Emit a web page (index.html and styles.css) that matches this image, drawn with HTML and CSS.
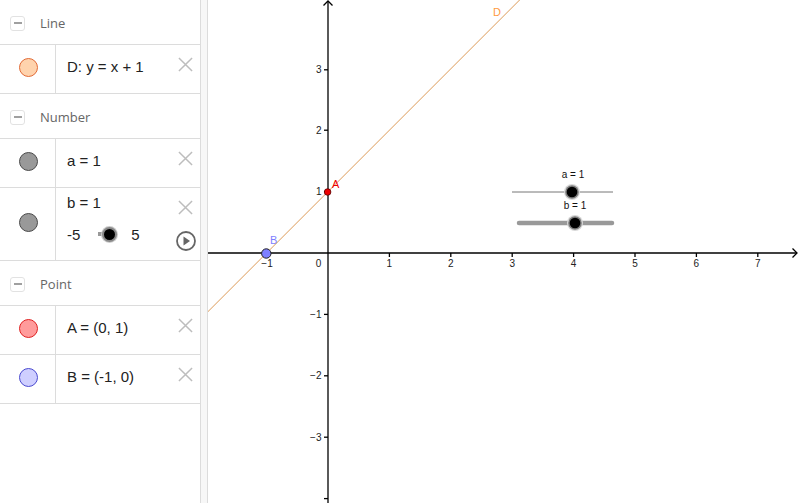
FILE: index.html
```html
<!DOCTYPE html>
<html>
<head>
<meta charset="utf-8">
<link rel="stylesheet" href="styles.css">
</head>
<body>
<div class="app">
  <div class="algebra">
    <div class="group-header"><span class="collapse"><span class="dash"></span></span><span class="group-title">Line</span></div>
    <div class="item">
      <div class="marble-cell"><span class="marble m-line"></span></div>
      <div class="content">
        <span class="expr">D: y = x + 1</span>
        <span class="actions"><svg class="del" viewBox="0 0 16 16"><path d="M1 1L15 15M15 1L1 15"/></svg></span>
      </div>
    </div>
    <div class="group-header"><span class="collapse"><span class="dash"></span></span><span class="group-title">Number</span></div>
    <div class="item">
      <div class="marble-cell"><span class="marble m-num"></span></div>
      <div class="content">
        <span class="expr">a = 1</span>
        <span class="actions"><svg class="del" viewBox="0 0 16 16"><path d="M1 1L15 15M15 1L1 15"/></svg></span>
      </div>
    </div>
    <div class="item item-tall">
      <div class="marble-cell"><span class="marble m-num"></span></div>
      <div class="content content-col">
        <div class="col-text">
          <span class="expr">b = 1</span>
          <div class="slider-row">
            <span>-5</span>
            <span class="mini-slider"><span class="stub"></span><span class="knob"></span></span>
            <span>5</span>
          </div>
        </div>
        <span class="actions actions-col">
          <svg class="del" viewBox="0 0 16 16"><path d="M1 1L15 15M15 1L1 15"/></svg>
          <svg class="play" viewBox="0 0 22 22"><circle cx="11" cy="11" r="9"/><path class="tri" d="M8.5 6.5L15 11L8.5 15.5Z"/></svg>
        </span>
      </div>
    </div>
    <div class="group-header"><span class="collapse"><span class="dash"></span></span><span class="group-title">Point</span></div>
    <div class="item">
      <div class="marble-cell"><span class="marble m-a"></span></div>
      <div class="content">
        <span class="expr">A = (0, 1)</span>
        <span class="actions"><svg class="del" viewBox="0 0 16 16"><path d="M1 1L15 15M15 1L1 15"/></svg></span>
      </div>
    </div>
    <div class="item">
      <div class="marble-cell"><span class="marble m-b"></span></div>
      <div class="content">
        <span class="expr">B = (-1, 0)</span>
        <span class="actions"><svg class="del" viewBox="0 0 16 16"><path d="M1 1L15 15M15 1L1 15"/></svg></span>
      </div>
    </div>
  </div>
  <div class="splitter"></div>
  <div class="graphics">
    <svg class="plot" viewBox="208 0 592 503" width="592" height="503">
      <line class="fn" x1="100" y1="419.6" x2="640" y2="-120.4"/>
      <g class="axis">
        <line x1="208" y1="253" x2="797" y2="253"/>
        <polyline points="792.5,248.5 797,253 792.5,257.5"/>
        <line x1="328" y1="503" x2="328" y2="1"/>
        <polyline points="323.5,5.5 328,1 332.5,5.5"/>
        <line x1="266.6" y1="253" x2="266.6" y2="257"/>
        <line x1="389.4" y1="253" x2="389.4" y2="257"/>
        <line x1="450.8" y1="253" x2="450.8" y2="257"/>
        <line x1="512.2" y1="253" x2="512.2" y2="257"/>
        <line x1="573.6" y1="253" x2="573.6" y2="257"/>
        <line x1="635" y1="253" x2="635" y2="257"/>
        <line x1="696.4" y1="253" x2="696.4" y2="257"/>
        <line x1="757.8" y1="253" x2="757.8" y2="257"/>
        <line x1="324" y1="69.8" x2="328" y2="69.8"/>
        <line x1="324" y1="130.2" x2="328" y2="130.2"/>
        <line x1="324" y1="191.6" x2="328" y2="191.6"/>
        <line x1="324" y1="314.4" x2="328" y2="314.4"/>
        <line x1="324" y1="375.8" x2="328" y2="375.8"/>
        <line x1="324" y1="437.2" x2="328" y2="437.2"/>
        <line x1="324" y1="498.6" x2="328" y2="498.6"/>
      </g>
      <g class="ticklabels xl">
        <text x="267" y="267">−1</text>
        <text x="389.4" y="267">1</text>
        <text x="450.8" y="267">2</text>
        <text x="512.2" y="267">3</text>
        <text x="573.6" y="267">4</text>
        <text x="635" y="267">5</text>
        <text x="696.4" y="267">6</text>
        <text x="757.8" y="267">7</text>
        <text x="318.5" y="267">0</text>
      </g>
      <g class="ticklabels yl">
        <text x="321.5" y="73.3">3</text>
        <text x="321.5" y="133.7">2</text>
        <text x="321.5" y="195.1">1</text>
        <text x="321.5" y="317.9">−1</text>
        <text x="321.5" y="379.3">−2</text>
        <text x="321.5" y="440.7">−3</text>
      </g>
      <text class="lbl-d" x="493" y="15.5">D</text>
      <g class="slider">
        <line class="track-a" x1="512" y1="192" x2="613" y2="192"/>
        <circle class="halo" cx="572" cy="192" r="8"/>
        <circle class="ring" cx="572" cy="192" r="6.8"/>
        <circle class="core" cx="572" cy="192" r="5.3"/>
        <text class="slbl" x="573" y="177.5">a = 1</text>
        <line class="track-b" x1="519" y1="223" x2="612" y2="223"/>
        <circle class="halo" cx="575" cy="223" r="8"/>
        <circle class="ring" cx="575" cy="223" r="6.8"/>
        <circle class="core" cx="575" cy="223" r="5.3"/>
        <text class="slbl" x="575" y="208.5">b = 1</text>
      </g>
      <circle class="pt-a" cx="327.6" cy="192" r="3.3"/>
      <text class="lbl-a" x="332" y="187.5">A</text>
      <circle class="pt-b" cx="266.3" cy="253.5" r="4.7"/>
      <text class="lbl-b" x="270" y="243.5">B</text>
    </svg>
  </div>
</div>
</body>
</html>
```
FILE: styles.css
```css
html, body {
  margin: 0;
  padding: 0;
  background: #fff;
}
.app {
  display: flex;
  width: 800px;
  height: 503px;
  overflow: hidden;
  font-family: "Liberation Sans", Arial, sans-serif;
}
.algebra {
  width: 200px;
  border-right: 1px solid #dcdcdc;
  flex: none;
  display: flex;
  flex-direction: column;
}
.group-header {
  height: 44px;
  border-bottom: 1px solid #dcdcdc;
  display: flex;
  align-items: center;
  box-sizing: content-box;
}
.collapse {
  width: 13px;
  height: 13px;
  border: 1px solid #e2e2e2;
  border-radius: 3px;
  margin-left: 10px;
  margin-top: 2px;
  display: flex;
  align-items: center;
  justify-content: center;
}
.dash {
  width: 8px;
  height: 1.5px;
  background: #a0a0a0;
}
.group-title {
  margin-left: 15px;
  font-family: "Open Sans", sans-serif;
  font-size: 13px;
  color: #666;
  margin-top: 1px;
}
.item {
  height: 48px;
  border-bottom: 1px solid #dcdcdc;
  display: flex;
}
.item-tall {
  height: 72px;
}
.marble-cell {
  width: 56px;
  border-right: 1px solid #dcdcdc;
  display: flex;
  align-items: center;
  justify-content: center;
  padding-bottom: 4px;
  box-sizing: border-box;
  flex: none;
}
.marble {
  width: 17px;
  height: 17px;
  border-radius: 50%;
  border: 1px solid #444;
  margin-left: 1px;
}
.m-line { background: #ffd3ad; border-color: #e26a35; }
.m-num { background: #999; border-color: #4a4a4a; }
.m-a { background: #ff9b9b; border-color: #e02020; }
.m-b { background: #cfcfff; border-color: #4a4ad0; }
.content {
  flex: 1;
  display: flex;
  align-items: center;
  padding-left: 11px;
  padding-bottom: 4px;
}
.expr {
  flex: 1;
  font-size: 15px;
  color: #222;
  line-height: 18px;
}
.actions {
  width: 22px;
  display: flex;
  justify-content: flex-start;
  align-self: flex-start;
  margin-top: 12px;
}
.del {
  width: 15px;
  height: 15px;
  stroke: #bdbdbd;
  stroke-width: 1.6;
  fill: none;
}
.content-col {
  align-items: stretch;
  padding-bottom: 0;
}
.col-text {
  flex: 1;
  display: flex;
  flex-direction: column;
  padding-top: 6px;
}
.col-text .expr {
  flex: none;
}
.slider-row {
  display: flex;
  align-items: center;
  height: 20px;
  margin-top: 12px;
  font-size: 15px;
  color: #222;
}
.mini-slider {
  display: flex;
  align-items: center;
  margin-left: 18px;
  margin-right: 14px;
}
.stub {
  width: 6px;
  height: 4px;
  background: #999;
  margin-right: -2px;
}
.knob {
  width: 11px;
  height: 11px;
  border-radius: 50%;
  background: #000;
  border: 2px solid #888;
  box-shadow: 0 0 0 1px #ccc;
}
.actions-col {
  flex-direction: column;
  align-items: flex-start;
}
.play {
  width: 22px;
  height: 22px;
  margin-top: 15px;
  margin-left: -3px;
  fill: none;
  stroke: #666;
  stroke-width: 1.8;
}
.play .tri {
  fill: #666;
  stroke: none;
}
.splitter {
  width: 6px;
  flex: none;
  background: #f7f7f7;
  border-right: 1px solid #dcdcdc;
}
.graphics {
  flex: 1;
  overflow: hidden;
}
.plot {
  display: block;
}
.fn {
  stroke: #dc9a58;
  stroke-width: 1;
}
.axis line, .axis polyline {
  stroke: #000;
  stroke-width: 1.3;
  fill: none;
}
.ticklabels text {
  font-family: "Liberation Sans", Arial, sans-serif;
  font-size: 10px;
  fill: #222;
}
.xl text { text-anchor: middle; }
.yl text { text-anchor: end; }
.lbl-d {
  font-size: 11px;
  fill: #ff9a40;
  font-family: "Liberation Sans", Arial, sans-serif;
}
.lbl-a {
  font-size: 11px;
  fill: #ee0000;
  font-family: "Liberation Sans", Arial, sans-serif;
}
.lbl-b {
  font-size: 11px;
  fill: #7f7fff;
  font-family: "Liberation Sans", Arial, sans-serif;
}
.track-a { stroke: #777; stroke-width: 1; }
.track-b { stroke: #999; stroke-width: 4.5; stroke-linecap: round; }
.halo { fill: #d8d8d8; }
.ring { fill: #7a7a7a; }
.core { fill: #000; }
.slbl {
  font-family: "Liberation Sans", Arial, sans-serif;
  font-size: 10px;
  fill: #111;
  text-anchor: middle;
}
.pt-a { fill: #ee0000; stroke: #500; stroke-width: 0.8; }
.pt-b { fill: #7f7fff; stroke: #222; stroke-width: 1; }
```
